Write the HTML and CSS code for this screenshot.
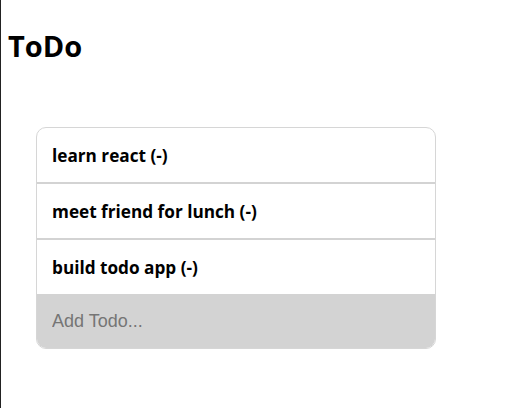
FILE: index.html
```html
<!DOCTYPE html>
<html>
<head>
<meta charset="utf-8">
<link rel="stylesheet" href="styles.css">
</head>
<body>
<div class="app">
  <h1 class="title">ToDo</h1>
  <div class="card">
    <ul class="list">
      <li class="item">learn react (-)</li>
      <li class="item">meet friend for lunch (-)</li>
      <li class="item">build todo app (-)</li>
    </ul>
    <input class="add" type="text" placeholder="Add Todo...">
  </div>
</div>
</body>
</html>
```
FILE: styles.css
```css
html {
  background: #fff;
}
body {
  margin: 0;
  min-height: 408px;
  border-left: 1px solid #222;
  font-family: "Open Sans", "Noto Sans", sans-serif;
}
.app {
  padding: 0 7px;
}
.title {
  margin: 0;
  padding-top: 24px;
  font-size: 29px;
  font-weight: 700;
  line-height: 44px;
  color: #000;
}
.card {
  margin: 59px 0 0 28px;
  width: 398px;
  border: 1px solid #d6d6d6;
  border-radius: 10px;
  overflow: hidden;
}
.list {
  list-style: none;
  margin: 0;
  padding: 0;
}
.item {
  height: 54px;
  padding: 0 15px;
  display: flex;
  align-items: center;
  font-size: 17.2px;
  font-weight: 700;
  color: #000;
  border-bottom: 1px solid #d3d3d3;
  border-top: 1px solid #d3d3d3;
}
.item:first-child {
  border-top: none;
}
.add {
  display: block;
  box-sizing: border-box;
  width: 100%;
  height: 53px;
  margin: 0;
  padding: 0 15px;
  border: none;
  outline: none;
  background: #d3d3d3;
  font-family: "Liberation Sans", Arial, sans-serif;
  font-size: 18px;
  color: #000;
}
.add::placeholder {
  color: #757575;
}
```
